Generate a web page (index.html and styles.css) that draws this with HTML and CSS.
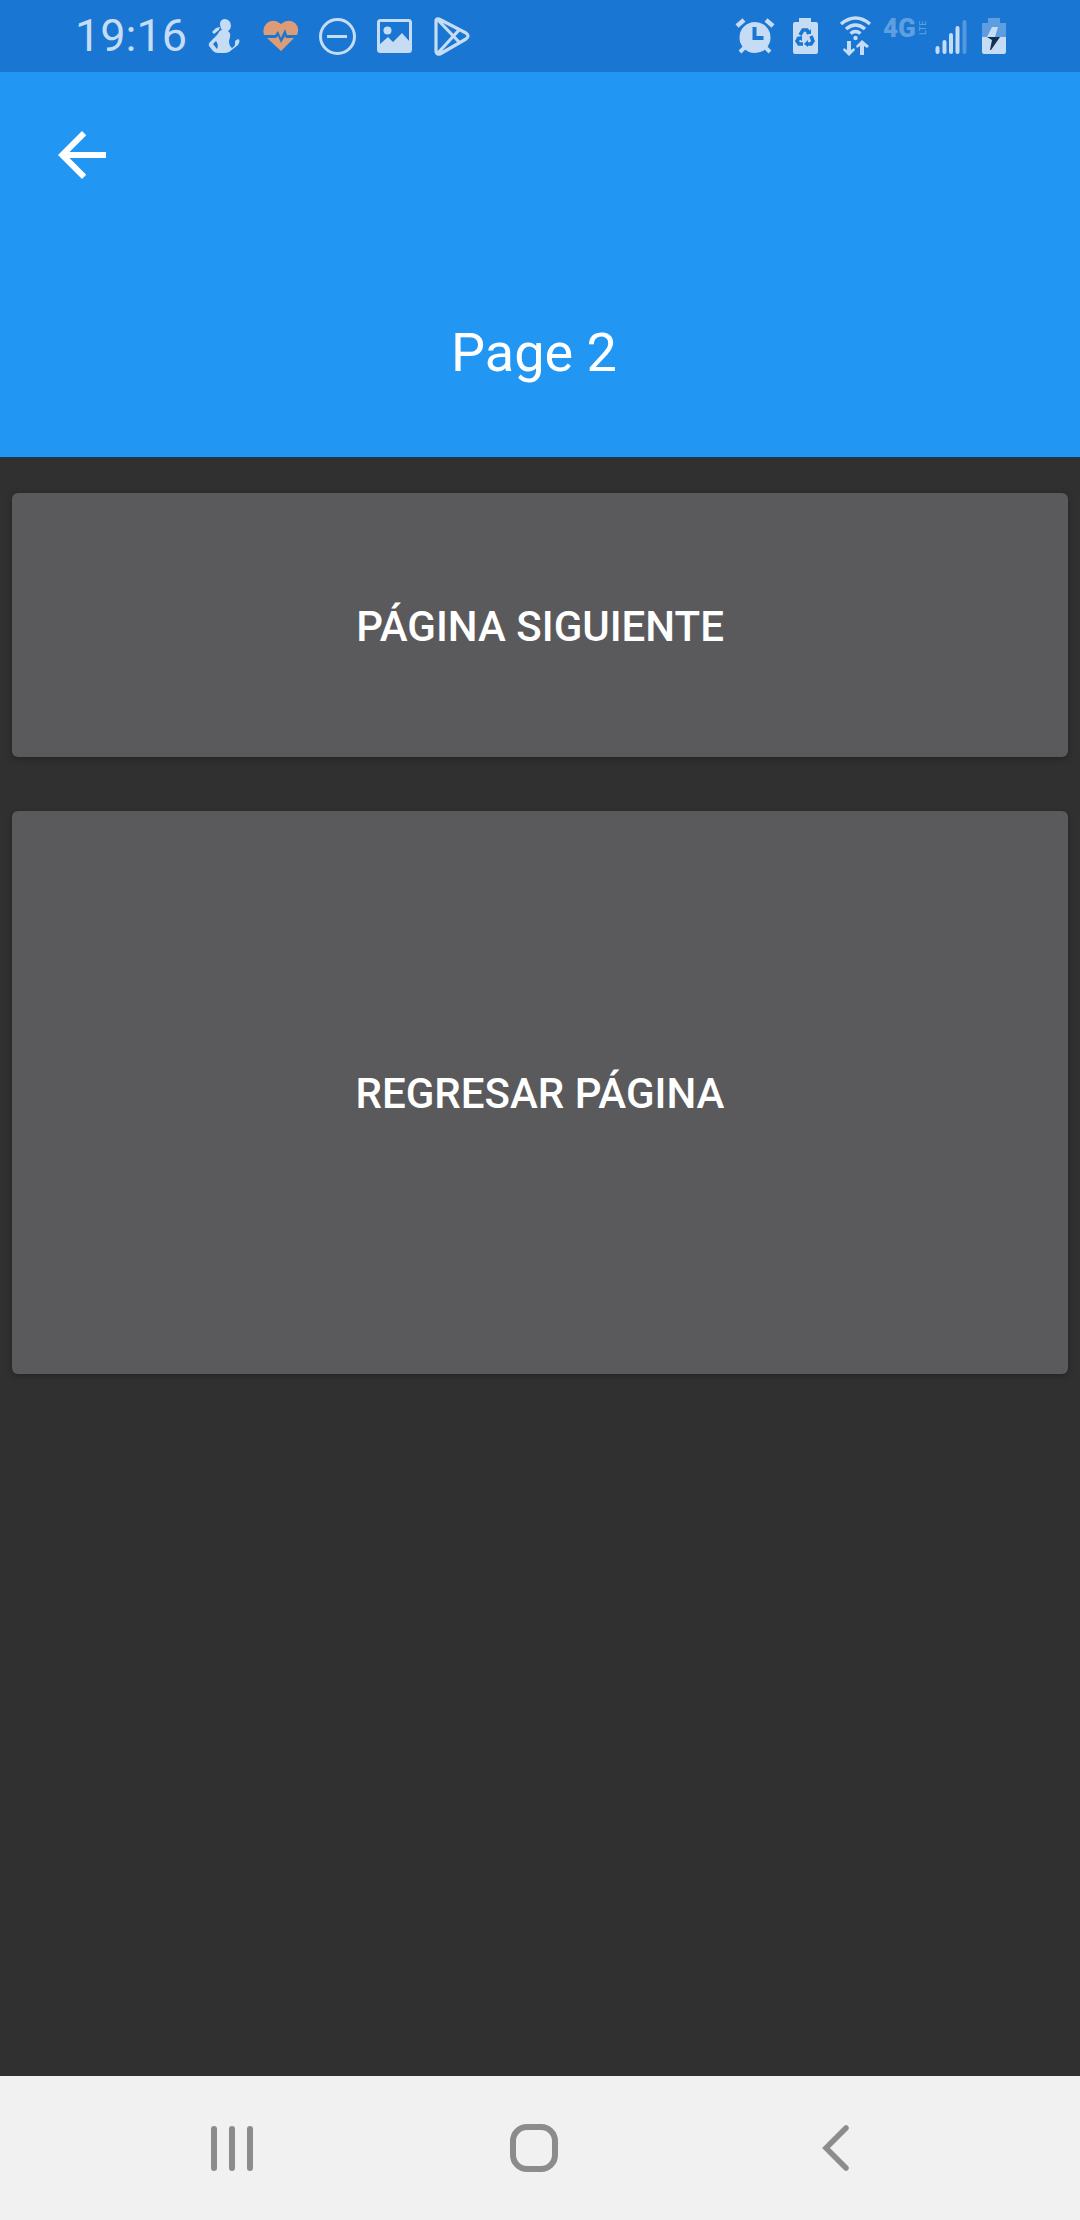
FILE: index.html
```html
<!DOCTYPE html>
<html lang="es">
<head>
<meta charset="utf-8">
<meta name="viewport" content="width=device-width, initial-scale=1">
<title>Page 2</title>
<link rel="stylesheet" href="styles.css">
</head>
<body>
<div class="status">
  <div class="status-left">
    <span class="clock">19:16</span>
    <svg class="notice" viewBox="204 16 40 40" aria-hidden="true">
      <path fill="currentColor" fill-rule="evenodd" d="M220 23q1-4 5-4 6 1 6 7 0 3-3 5 3 2 2 6l-1 4q0 5 3 7 4-2 3-7l3-2q3 1 0 6l-9 7q-2 1-5 1h-6q-3 0-5-2l-4-5q-1-2 1-4l7-7 2-3q1-2 3-2-2-2-2-7zM216 41l-3 3 4 5q2-4-1-8zM212 32l4-4 4-1-1 3-5 4z"/>
    </svg>
    <svg class="notice heart" viewBox="261 16 40 40" aria-hidden="true">
      <path fill="currentColor" d="M264 35q-2-7 3-12 7-5 14 1 7-6 14-1 5 5 2 12h-10l-2-6-4 9-3-7-3 4zM267 38h9l2-2 3 7 4-7 1 2h8l-13 13z"/>
    </svg>
    <svg class="notice" viewBox="318 16 40 40" aria-hidden="true">
      <circle cx="337.500" cy="36.500" r="17" fill="none" stroke="currentColor" stroke-width="3"/>
      <path d="M327 36.500h20" stroke="currentColor" stroke-width="3"/>
    </svg>
    <svg class="notice" viewBox="375 16 40 40" aria-hidden="true">
      <rect x="378.500" y="20.500" width="32" height="31" rx="2" fill="none" stroke="currentColor" stroke-width="3"/>
      <circle cx="387.500" cy="30.500" r="4" fill="currentColor"/>
      <path fill="currentColor" d="M379 45l9-8 5 5 9-9 8 9v9h-31z"/>
    </svg>
    <svg class="notice" viewBox="432 16 40 40" aria-hidden="true">
      <path d="M439 19l27 14q4 3 0 6l-26 15q-4 1-4-3V21q0-3 3-2zM438 20l21 22M438 53l21-23" fill="none" stroke="currentColor" stroke-width="3.200" stroke-linejoin="round"/>
    </svg>
  </div>
  <div class="status-right">
    <svg class="indicator" viewBox="729 16 50 40" aria-hidden="true">
      <circle cx="754" cy="37.500" r="15.500" fill="currentColor"/>
      <path d="M736 26l7-6M772 26l-7-6" stroke="currentColor" stroke-width="4.500"/>
      <path d="M744 47l-5 5M764 47l5 5" stroke="currentColor" stroke-width="4"/>
      <path class="cut" d="M753.500 27v11h9" fill="none" stroke-width="4"/>
    </svg>
    <svg class="indicator" viewBox="779 16 50 40" aria-hidden="true">
      <path fill="currentColor" d="M798 18h12v4h5q2 0 2 2v28q0 2-2 2h-21q-2 0-2-2V24q0-2 2-2h4z"/>
      <g class="cut" fill="none" stroke-width="3.500">
        <path d="M799 35l3-5h4l2 4"/>
        <path d="M810 36l2 5-2 3h-4"/>
        <path d="M802 44h-4l-2-3 2-3"/>
      </g>
      <path class="cut-fill" d="M805 34h5v-5zM807 40v7l-4-3zM795 37l6-1v5z"/>
    </svg>
    <svg class="indicator" viewBox="829 16 50 40" aria-hidden="true">
      <g fill="none" stroke="currentColor" stroke-width="3.500">
        <path d="M840 24q14.500-12 29 0M845 29q9.500-8 19 0M849.500 33.500q5-4 10 0"/>
      </g>
      <circle cx="854.500" cy="38" r="2.200" fill="currentColor"/>
      <path fill="currentColor" d="M846 41h4v9l3-2 1 2-6 6-6-6 1-2 3 2zM859 55h4v-9l3 2 2-2-7-6-6 6 1 2 3-2z"/>
    </svg>
    <span class="network"><b>4G</b><small>LTE</small></span>
    <svg class="indicator" viewBox="929 16 50 40" aria-hidden="true">
      <g stroke="currentColor" stroke-width="4" stroke-linecap="round">
        <path d="M936.500 48v4M943.500 42v10M950 35v17M956.500 28v24"/>
        <path d="M963.500 22v30" opacity=".35"/>
      </g>
    </svg>
    <svg class="indicator" viewBox="979 16 50 40" aria-hidden="true">
      <path fill="currentColor" opacity=".4" d="M987 18h12v5h6v14h-24V23h6z"/>
      <path fill="currentColor" d="M981 37h24v15q0 2-2 2h-20q-2 0-2-2zM991 27h6l-3 10h-8z"/>
      <path class="bolt" d="M986 37h13l-9 13h-1l2-10z"/>
    </svg>
  </div>
</div>
<header class="header">
  <button class="back" type="button" aria-label="Volver">
    <svg viewBox="0 0 24 24" aria-hidden="true"><path fill="currentColor" d="M20 11H7.830l5.590-5.590L12 4l-8 8 8 8 1.410-1.410L7.830 13H20z"/></svg>
  </button>
  <h1 class="title">Page 2</h1>
</header>
<main class="actions">
  <button class="action next" type="button">PÁGINA SIGUIENTE</button>
  <button class="action previous" type="button">REGRESAR PÁGINA</button>
</main>
<nav class="navbar">
  <button type="button" aria-label="Recientes">
    <svg viewBox="0 0 48 48" aria-hidden="true"><path d="M6 5v39M24 5v39M42 5v39" stroke="currentColor" stroke-width="6" stroke-linecap="round"/></svg>
  </button>
  <button type="button" aria-label="Inicio">
    <svg viewBox="0 0 48 48" aria-hidden="true"><rect x="3" y="3" width="42" height="42" rx="14" fill="none" stroke="currentColor" stroke-width="6"/></svg>
  </button>
  <button type="button" aria-label="Atrás">
    <svg viewBox="0 0 48 48" aria-hidden="true"><path d="M34 4L14 24l20 20" fill="none" stroke="currentColor" stroke-width="5.500" stroke-linecap="round"/></svg>
  </button>
</nav>
</body>
</html>
```
FILE: styles.css
```css
* {
  box-sizing: border-box;
}

body {
  display: flex;
  flex-direction: column;
  min-height: 100vh;
  margin: 0;
  background: #303030;
  color: #fff;
  font-family: Roboto, "Liberation Sans", sans-serif;
}

button {
  padding: 0;
  border: 0;
  background: none;
  color: inherit;
  font: inherit;
  cursor: pointer;
}

svg {
  display: block;
}

.status {
  display: flex;
  justify-content: space-between;
  height: 72px;
  padding: 0 50px 0 75px;
  background: #1976d2;
  color: #c5dcf4;
}

.status-left,
.status-right {
  display: flex;
  align-items: center;
}

.status-left {
  gap: 17px;
}

.clock {
  width: 112px;
  font-size: 45px;
  line-height: 74px;
}

.notice {
  width: 40px;
  height: 40px;
}

.heart {
  color: #dd9c78;
}

.indicator {
  width: 50px;
  height: 40px;
}

.cut {
  stroke: #1976d2;
}

.cut-fill {
  fill: #1976d2;
}

.bolt {
  fill: #12304f;
}

.network {
  display: flex;
  gap: 2px;
  width: 50px;
  height: 40px;
  padding-left: 3px;
  color: #5d9fdf;
  line-height: 24px;
}

.network b {
  font-size: 26px;
  font-weight: 900;
}

.network small {
  flex: none;
  width: 10px;
  height: 24px;
  font-size: 9px;
  font-weight: 500;
  line-height: 10px;
  text-align: center;
  writing-mode: vertical-rl;
  transform: rotate(180deg);
}

.header {
  padding: 47px 14px 72px 46px;
  border-bottom: 1px solid #173a58;
  background: #2196f3;
}

.back {
  display: block;
  width: 72px;
  height: 72px;
}

.title {
  margin: 130px 44px 0 0;
  font-size: 54px;
  font-weight: 400;
  line-height: 64px;
  text-align: center;
}

.actions {
  display: flex;
  flex: 1;
  flex-direction: column;
  gap: 54px;
  padding: 35px 12px;
}

.action {
  padding-top: 2px;
  border-radius: 6px;
  background: #5a5a5c;
  box-shadow: 0 2px 6px rgba(0, 0, 0, 0.25);
  font-size: 42px;
  font-weight: 500;
}

.next {
  min-height: 264px;
}

.previous {
  min-height: 563px;
}

.navbar {
  display: grid;
  grid-template-columns: repeat(3, 1fr);
  height: 144px;
  padding: 0 93px 0 81px;
  background: #f1f1f1;
  color: #8c8c8c;
}

.navbar button {
  display: grid;
  place-items: center;
}

.navbar svg {
  width: 48px;
  height: 48px;
}
```
